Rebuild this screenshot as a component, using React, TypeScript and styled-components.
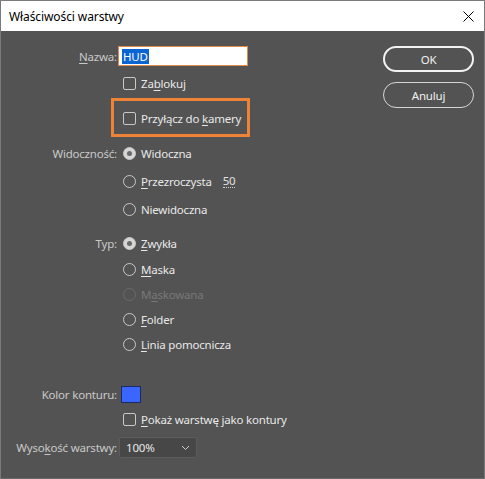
import React from "react";
import styled, { createGlobalStyle } from "styled-components";

const Global = createGlobalStyle`
  html, body { margin: 0; padding: 0; background: #535353; }
  body { font-family: "Noto Sans", "Open Sans", sans-serif; font-size: 11.5px; letter-spacing: -0.2px; }
  * { box-sizing: border-box; }
`;

const Window = styled.div`
  width: 485px;
  height: 479px;
  border: 1px solid #7a7a7a;
  border-bottom-color: #6a6a6a;
  display: flex;
  flex-direction: column;
  background: #535353;
`;

const TitleBar = styled.div`
  height: 30px;
  background: #ffffff;
  display: flex;
  align-items: center;
  justify-content: space-between;
  padding: 0 0 0 8px;
  color: #000;
  font-size: 12px;
  letter-spacing: -0.1px;
`;

const CloseBtn = styled.div`
  width: 30px;
  height: 30px;
  display: flex;
  align-items: center;
  justify-content: center;
  margin-right: 1px;
`;

const Body = styled.div`
  flex: 1;
  display: flex;
  justify-content: space-between;
`;

const Form = styled.div`
  display: flex;
  flex-direction: column;
  padding-top: 15px;
`;

const Row = styled.div<{ $h: number; $mt: number }>`
  display: grid;
  grid-template-columns: 116px auto;
  column-gap: 3px;
  align-items: center;
  height: ${(p) => p.$h}px;
  margin-top: ${(p) => p.$mt}px;
`;

const Label = styled.div`
  text-align: right;
  color: #c9c9c9;
  white-space: nowrap;
`;

const Cell = styled.div`
  position: relative;
  display: flex;
  align-items: center;
  height: 100%;
`;

const Option = styled.label<{ $disabled?: boolean }>`
  display: flex;
  align-items: center;
  gap: 5px;
  margin-left: 3px;
  color: ${(p) => (p.$disabled ? "#787878" : "#e8e8e8")};
  white-space: nowrap;
`;

const Box = styled.span`
  width: 13px;
  height: 13px;
  border: 1px solid #c8c8c8;
  border-radius: 2px;
  display: inline-block;
`;

const Radio = styled.span<{ $checked?: boolean; $disabled?: boolean }>`
  width: 13px;
  height: 13px;
  border-radius: 50%;
  border: 1px solid ${(p) => (p.$disabled ? "#6a6a6a" : "#c8c8c8")};
  background: ${(p) => (p.$checked ? "#d6d6d6" : "transparent")};
  display: inline-flex;
  align-items: center;
  justify-content: center;
  &::after {
    content: "";
    width: 5px;
    height: 5px;
    border-radius: 50%;
    background: #6a6a6a;
    display: ${(p) => (p.$checked ? "block" : "none")};
  }
`;

const U = styled.span`
  text-decoration: underline;
  text-underline-offset: 2px;
`;

const TextInput = styled.div`
  margin-left: -2px;
  width: 130px;
  height: 20px;
  background: #ffffff;
  border: 1px solid #e08a4a;
  display: flex;
  align-items: center;
  padding-left: 3px;
`;

const Selected = styled.span`
  background: #0a64d2;
  color: #ffffff;
  line-height: 15px;
  padding: 0 1px;
`;

const Highlight = styled.div`
  position: absolute;
  left: -9px;
  top: -11px;
  width: 139px;
  height: 39px;
  border: 3px solid #ee8236;
  pointer-events: none;
`;

const Value = styled.span`
  margin-left: 11px;
  color: #e0e0e0;
  border-bottom: 1px dotted #d0d0d0;
  line-height: 13px;
`;

const Swatch = styled.div`
  margin-left: 1px;
  width: 20px;
  height: 17px;
  background: #3a66ff;
  border: 1px solid #1b2a66;
`;

const Select = styled.div`
  margin-left: -1px;
  width: 78px;
  height: 21px;
  background: #474747;
  border: 1px solid #5c5c5c;
  border-radius: 2px;
  display: flex;
  align-items: center;
  justify-content: space-between;
  padding: 0 6px 0 6px;
  color: #e8e8e8;
`;

const Buttons = styled.div`
  display: flex;
  flex-direction: column;
  gap: 10px;
  padding-top: 15px;
  margin-right: 10px;
`;

const Button = styled.div<{ $primary?: boolean }>`
  width: 91px;
  height: 26px;
  border-radius: 13px;
  border: ${(p) => (p.$primary ? "2px solid #f2f2f2" : "1px solid #d6d6d6")};
  color: #f0f0f0;
  display: flex;
  align-items: center;
  justify-content: center;
`;

export default function App() {
  return (
    <>
      <Global />
      <Window>
        <TitleBar>
          <span>Właściwości warstwy</span>
          <CloseBtn>
            <svg width="11" height="11" viewBox="0 0 11 11">
              <path d="M0.5 0.5 L10.5 10.5 M10.5 0.5 L0.5 10.5" stroke="#000" strokeWidth="1" />
            </svg>
          </CloseBtn>
        </TitleBar>
        <Body>
          <Form>
            <Row $h={20} $mt={0}>
              <Label>
                <U>N</U>azwa:
              </Label>
              <Cell>
                <TextInput>
                  <Selected>HUD</Selected>
                </TextInput>
              </Cell>
            </Row>
            <Row $h={18} $mt={8}>
              <span />
              <Cell>
                <Option>
                  <Box />
                  <span>
                    Za<U>b</U>lokuj
                  </span>
                </Option>
              </Cell>
            </Row>
            <Row $h={18} $mt={17}>
              <span />
              <Cell>
                <Option>
                  <Box />
                  <span>
                    Przyłącz do <U>k</U>amery
                  </span>
                </Option>
                <Highlight />
              </Cell>
            </Row>
            <Row $h={18} $mt={17}>
              <Label>Widoczność:</Label>
              <Cell>
                <Option>
                  <Radio $checked />
                  <span>Widoczna</span>
                </Option>
              </Cell>
            </Row>
            <Row $h={18} $mt={10}>
              <span />
              <Cell>
                <Option>
                  <Radio />
                  <span>
                    <U>P</U>rzezroczysta
                  </span>
                </Option>
                <Value>50</Value>
              </Cell>
            </Row>
            <Row $h={18} $mt={10}>
              <span />
              <Cell>
                <Option>
                  <Radio />
                  <span>Niewidoczna</span>
                </Option>
              </Cell>
            </Row>
            <Row $h={18} $mt={16}>
              <Label>Typ:</Label>
              <Cell>
                <Option>
                  <Radio $checked />
                  <span>
                    <U>Z</U>wykła
                  </span>
                </Option>
              </Cell>
            </Row>
            <Row $h={18} $mt={8}>
              <span />
              <Cell>
                <Option>
                  <Radio />
                  <span>
                    <U>M</U>aska
                  </span>
                </Option>
              </Cell>
            </Row>
            <Row $h={18} $mt={7}>
              <span />
              <Cell>
                <Option $disabled>
                  <Radio $disabled />
                  <span>
                    M<U>a</U>skowana
                  </span>
                </Option>
              </Cell>
            </Row>
            <Row $h={18} $mt={7}>
              <span />
              <Cell>
                <Option>
                  <Radio />
                  <span>
                    <U>F</U>older
                  </span>
                </Option>
              </Cell>
            </Row>
            <Row $h={18} $mt={7}>
              <span />
              <Cell>
                <Option>
                  <Radio />
                  <span>
                    <U>L</U>inia pomocnicza
                  </span>
                </Option>
              </Cell>
            </Row>
            <Row $h={18} $mt={32}>
              <Label>Kolor konturu:</Label>
              <Cell>
                <Swatch />
              </Cell>
            </Row>
            <Row $h={18} $mt={7}>
              <span />
              <Cell>
                <Option>
                  <Box />
                  <span>
                    <U>P</U>okaż warstwę jako kontury
                  </span>
                </Option>
              </Cell>
            </Row>
            <Row $h={21} $mt={9}>
              <Label>
                Wyso<U>k</U>ość warstwy:
              </Label>
              <Cell>
                <Select>
                  <span>100%</span>
                  <svg width="9" height="6" viewBox="0 0 9 6">
                    <path d="M1 1 L4.5 4.5 L8 1" stroke="#d0d0d0" strokeWidth="1" fill="none" />
                  </svg>
                </Select>
              </Cell>
            </Row>
          </Form>
          <Buttons>
            <Button $primary>OK</Button>
            <Button>Anuluj</Button>
          </Buttons>
        </Body>
      </Window>
    </>
  );
}
